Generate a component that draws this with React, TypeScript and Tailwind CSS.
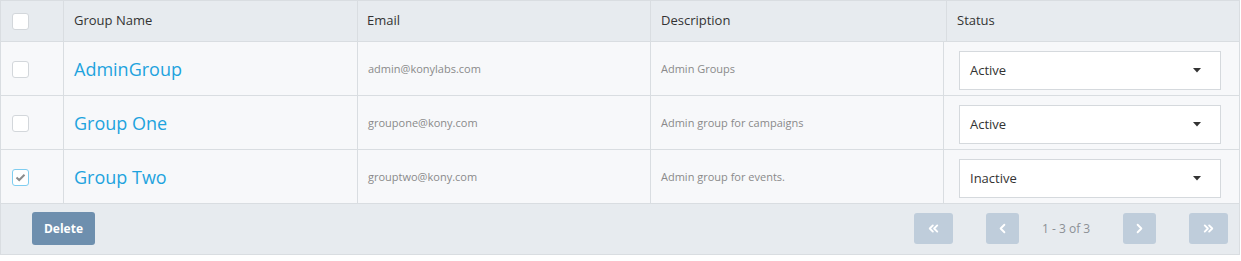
import React from "react";
import { ChevronsLeft, ChevronLeft, ChevronRight, ChevronsRight } from "lucide-react";

const font = { fontFamily: '"Open Sans", "Noto Sans", Arial, sans-serif' };

const rows = [
  { name: "AdminGroup", email: "admin@konylabs.com", desc: "Admin Groups", status: "Active", checked: false },
  { name: "Group One", email: "groupone@kony.com", desc: "Admin group for campaigns", status: "Active", checked: false },
  { name: "Group Two", email: "grouptwo@kony.com", desc: "Admin group for events.", status: "Inactive", checked: true },
];

function Box({ checked }: { checked?: boolean }) {
  return (
    <div
      className={
        "w-[17px] h-[17px] rounded-[3px] bg-white border flex items-center justify-center " +
        (checked ? "border-[#7fcdf0]" : "border-[#d3d7db]")
      }
    >
      {checked && (
        <svg width="11" height="9" viewBox="0 0 11 9">
          <path d="M1.5 4.5 L4.2 7 L9.5 1.8" fill="none" stroke="#8c8c8c" strokeWidth="2" />
        </svg>
      )}
    </div>
  );
}

export default function App() {
  return (
    <div style={font} className="w-[1241px] h-[261px] bg-white">
      <div className="w-[1240px] border border-[#d9dde1]">
        {/* header */}
        <div className="grid grid-cols-[63px_294px_293px_296px_1fr] h-[41px] bg-[#e7ebef] border-b border-[#d9dde1] text-[13px] text-[#333]">
          <div className="border-r border-[#d9dde1] flex items-center pl-[11px]">
            <Box />
          </div>
          <div className="border-r border-[#d9dde1] flex items-center pl-[10px]">Group Name</div>
          <div className="border-r border-[#d9dde1] flex items-center pl-[9px]">Email</div>
          <div className="border-r border-[#d9dde1] flex items-center pl-[10px]">Description</div>
          <div className="flex items-center pl-[10px]">Status</div>
        </div>
        {/* rows */}
        {rows.map((r) => (
          <div
            key={r.name}
            className="grid grid-cols-[63px_294px_293px_293px_1fr] h-[54px] bg-[#f7f8fa] border-b border-[#d9dde1]"
          >
            <div className="border-r border-[#d9dde1] flex items-center pl-[11px] pt-[2px]">
              <Box checked={r.checked} />
            </div>
            <div className="border-r border-[#d9dde1] flex items-center pl-[10px] pt-[2px] text-[18px] text-[#1ea3de]">
              {r.name}
            </div>
            <div className="border-r border-[#d9dde1] flex items-center pl-[10px] pt-[1px] text-[11px] text-[#8a8a8a]">
              {r.email}
            </div>
            <div className="border-r border-[#d9dde1] flex items-center pl-[10px] pt-[1px] text-[11px] text-[#8a8a8a]">
              {r.desc}
            </div>
            <div className="flex items-start pt-[9px] pl-[15px] pr-[18px]">
              <div className="flex-1 h-[39px] bg-white border border-[#d5d9dd] flex items-center justify-between pl-[10px] pr-[19px] text-[13px] text-[#333]">
                <span>{r.status}</span>
                <svg width="8" height="5" viewBox="0 0 8 5">
                  <path d="M0 0 L8 0 L4 4.5 Z" fill="#333" />
                </svg>
              </div>
            </div>
          </div>
        ))}
        {/* footer */}
        <div className="h-[50px] bg-[#e7ebef] flex items-start justify-between pl-[31px] pr-[11px] pt-[8px]">
          <button className="w-[63px] h-[33px] rounded-[3px] bg-[#6e8fae] text-white text-[12px] font-bold">
            Delete
          </button>
          <div className="flex items-center pt-[1px]">
            <div className="w-[39px] h-[31px] rounded-[3px] bg-[#bfcddb] flex items-center justify-center">
              <ChevronsLeft size={15} color="#fff" strokeWidth={3} />
            </div>
            <div className="ml-[33px] w-[33px] h-[31px] rounded-[3px] bg-[#bfcddb] flex items-center justify-center">
              <ChevronLeft size={15} color="#fff" strokeWidth={3} />
            </div>
            <div className="w-[104px] pl-[23px] text-left text-[12px] text-[#8c9095]">1 - 3 of 3</div>
            <div className="w-[33px] h-[31px] rounded-[3px] bg-[#bfcddb] flex items-center justify-center">
              <ChevronRight size={15} color="#fff" strokeWidth={3} />
            </div>
            <div className="ml-[33px] w-[39px] h-[31px] rounded-[3px] bg-[#bfcddb] flex items-center justify-center">
              <ChevronsRight size={15} color="#fff" strokeWidth={3} />
            </div>
          </div>
        </div>
      </div>
    </div>
  );
}
